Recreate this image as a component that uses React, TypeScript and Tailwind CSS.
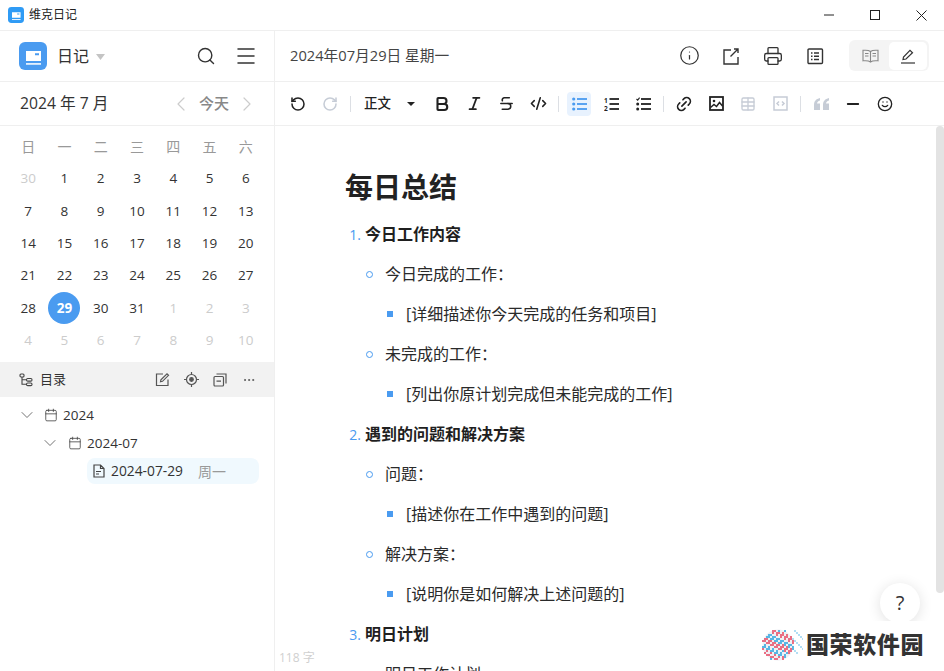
import React from "react";
import {
  Search, Menu, ChevronLeft, ChevronRight, ChevronDown, Info, Printer, RotateCcw, RotateCw,
  Bold, Italic, Strikethrough, CodeXml, Link2, Table, Minus, Smile,
  Ellipsis, Calendar,
} from "lucide-react";

const Logo = ({ small }: { small?: boolean }) => (
  <svg viewBox="0 0 28 28" className={small ? "w-[16px] h-[16px]" : "w-[28px] h-[28px]"}>
    <rect width="28" height="28" rx="6" fill={small ? "#2f9bf5" : "#4a9bf0"} />
    <path fillRule="evenodd" d="M7 9h15v10H7zM16 11.200v2h4v-2z" fill="#fff" />
    <rect x="7" y="21" width="15" height="1.800" fill="#e4f0fd" />
  </svg>
);

const Bar = () => <div className="w-px h-[16px] mx-2 bg-[#dcdfe4]" />;

const ToolIcon = ({ children, active }: { children: React.ReactNode; active?: boolean }) => (
  <div className={`w-[24px] h-[24px] flex items-center justify-center rounded-[4px] ${active ? "bg-[#e8f2fe] text-[#4a9bf0]" : ""}`}>{children}</div>
);

const weekdays = ["日", "一", "二", "三", "四", "五", "六"];
const days: [string, number][] = [
  ["30", 0], ["1", 1], ["2", 1], ["3", 1], ["4", 1], ["5", 1], ["6", 1],
  ["7", 1], ["8", 1], ["9", 1], ["10", 1], ["11", 1], ["12", 1], ["13", 1],
  ["14", 1], ["15", 1], ["16", 1], ["17", 1], ["18", 1], ["19", 1], ["20", 1],
  ["21", 1], ["22", 1], ["23", 1], ["24", 1], ["25", 1], ["26", 1], ["27", 1],
  ["28", 1], ["29", 2], ["30", 1], ["31", 1], ["1", 0], ["2", 0], ["3", 0],
  ["4", 0], ["5", 0], ["6", 0], ["7", 0], ["8", 0], ["9", 0], ["10", 0],
];

const rows: [number, string, string?][] = [
  [0, "今日工作内容", "1."],
  [1, "今日完成的工作："],
  [2, "[详细描述你今天完成的任务和项目]"],
  [1, "未完成的工作："],
  [2, "[列出你原计划完成但未能完成的工作]"],
  [0, "遇到的问题和解决方案", "2."],
  [1, "问题："],
  [2, "[描述你在工作中遇到的问题]"],
  [1, "解决方案："],
  [2, "[说明你是如何解决上述问题的]"],
  [0, "明日计划", "3."],
  [1, "明日工作计划"],
];

const Row = ({ level, text, num }: { level: number; text: string; num?: string }) => {
  if (level === 0)
    return (
      <div className="h-[40px] flex items-center">
        <span className="w-[16px] text-right text-[14px] text-[#4a9bf0] mr-[4px]">{num}</span>
        <span className="font-bold text-[16px] leading-[24px] text-[#1f1f1f]">{text}</span>
      </div>
    );
  if (level === 1)
    return (
      <div className="h-[40px] flex items-center pl-[21px]">
        <span className="w-[7px] h-[7px] rounded-full border border-[#4a9bf0] mr-[12px]" />
        <span className="text-[16px] leading-[24px] text-[#2a2a2a]">{text}</span>
      </div>
    );
  return (
    <div className="h-[40px] flex items-center pl-[42px]">
      <span className="w-[6px] h-[6px] bg-[#4a9bf0] mr-[13px]" />
      <span className="text-[16px] leading-[24px] text-[#2a2a2a]">{text}</span>
    </div>
  );
};

const GlobeLogo = () => {
  const dots: React.ReactNode[] = [];
  for (let y = 0; y < 17; y++) {
    for (let x = 0; x < 24; x++) {
      const cx = 2 + x * 2;
      const cy = 2 + y * 2;
      const d = Math.hypot(cx - 17, cy - 18);
      const inside = d <= 16;
      const tail = !inside && cx >= 24 && cx <= 42 && cy >= 3 && cy <= 26 && (x * 2 + y * 3) % 5 === 0;
      if (!inside && !tail) continue;
      const band = Math.floor((cy - cx * 0.45 + 40) / 6) % 2 === 0;
      if (inside && ((x + y) % 3 === 2 || (x * 3 + y) % 7 === 0)) continue;
      const fill = tail ? "#9fd6f2" : band ? "#e8506a" : "#35a8e0";
      dots.push(<rect key={`${x}-${y}`} x={cx - 0.9} y={cy - 0.9} width={1.8} height={1.8} fill={fill} />);
    }
  }
  return (
    <svg viewBox="0 0 42 36" className="w-[42px] h-[36px]">
      <circle cx="17" cy="18" r="15.500" fill="#eef0f4" />
      {dots}
    </svg>
  );
};

export default function App() {
  return (
    <div className="relative w-[944px] h-[671px] overflow-hidden bg-white flex flex-col text-[#333]" style={{ fontFamily: '"Open Sans","Noto Sans CJK SC",sans-serif' }}>
      {/* title bar */}
      <div className="h-[31px] flex items-center border-b border-[#efefef] shrink-0">
        <div className="ml-[8px]"><Logo small /></div>
        <span className="ml-[5px] text-[12px] text-[#222]">维克日记</span>
        <div className="ml-auto flex items-center text-[#222]">
          <div className="w-[46px] flex justify-center"><svg width="10" height="10" viewBox="0 0 10 10"><path d="M0 5h10" stroke="currentColor" /></svg></div>
          <div className="w-[46px] flex justify-center"><svg width="10" height="10" viewBox="0 0 10 10"><rect x=".5" y=".5" width="9" height="9" fill="none" stroke="currentColor" /></svg></div>
          <div className="w-[46px] flex justify-center"><svg width="11" height="11" viewBox="0 0 11 11"><path d="M.5.5l10 10M10.500.5l-10 10" stroke="currentColor" /></svg></div>
        </div>
      </div>

      <div className="flex flex-1 min-h-0">
        {/* sidebar */}
        <aside className="w-[275px] shrink-0 border-r border-[#efefef] flex flex-col">
          <div className="h-[51px] shrink-0 flex items-center pl-[19px] border-b border-[#efefef]">
            <Logo />
            <span className="ml-[10px] text-[16px] text-[#333]">日记</span>
            <svg width="10" height="6" viewBox="0 0 10 6" className="ml-[7px] mt-[1px]"><path d="M0 0h9L4.500 6z" fill="#c4c4c4" /></svg>
            <Search className="ml-auto w-[20px] h-[20px] text-[#333]" strokeWidth={1.700} />
            <Menu className="ml-[18px] mr-[16px] w-[24px] h-[24px] text-[#333]" strokeWidth={1.500} />
          </div>
          <div className="h-[44px] shrink-0 flex items-center pl-[20px] border-b border-[#efefef]">
            <span className="pt-[1px] text-[15.700px] text-[#333]">2024 年 7 月</span>
            <ChevronLeft className="ml-auto w-[24px] h-[24px] text-[#ccc]" strokeWidth={1.200} />
            <span className="mx-[6px] text-[15px] text-[#888] font-medium">今天</span>
            <ChevronRight className="mr-[15px] w-[24px] h-[24px] text-[#ccc]" strokeWidth={1.200} />
          </div>
          <div className="grid grid-cols-7 px-[10px] pt-[4px] shrink-0 auto-rows-[32.300px]">
            {weekdays.map((w) => (
              <div key={w} className="flex items-center justify-center text-[14px] text-[#999]">{w}</div>
            ))}
            {days.map(([d, s], i) => (
              <div key={i} className="flex items-center justify-center text-[13.500px]">
                {s === 2 ? (
                  <span className="w-[32px] h-[32px] rounded-full bg-[#4a9bf0] text-white font-bold flex items-center justify-center">{d}</span>
                ) : (
                  <span className={s === 1 ? "text-[#333]" : "text-[#ccc]"}>{d}</span>
                )}
              </div>
            ))}
          </div>
          <div className="mt-[6px] h-[35px] shrink-0 bg-[#f2f2f2] flex items-center pl-[19px]">
            <svg width="14" height="14" viewBox="0 0 14 14" fill="none" stroke="#444" strokeWidth="1.100"><rect x="1" y="1" width="4" height="3" rx="1" /><rect x="7.500" y="5.500" width="5.500" height="2.600" rx="1.200" /><rect x="7.500" y="10" width="5.500" height="2.600" rx="1.200" /><path d="M3 4v7.300h4.500M3 6.800h4.500" /></svg>
            <span className="ml-[7px] text-[13px] text-[#333]">目录</span>
            <svg className="ml-auto" width="15" height="15" viewBox="0 0 15 15" fill="none" stroke="#555" strokeWidth="1.200"><path d="M13 7.500V13.500H1.500V2H8" /><path d="M5.500 9.800l.4-2L12 1.800l1.500 1.500-6 6z" /></svg>
            <svg className="ml-[14px]" width="15" height="15" viewBox="0 0 15 15" fill="none" stroke="#555" strokeWidth="1.200"><circle cx="7.500" cy="7.500" r="5" /><circle cx="7.500" cy="7.500" r="1.800" fill="#555" /><path d="M7.500 0v2.500M7.500 12.500V15M0 7.500h2.500M12.500 7.500H15" /></svg>
            <svg className="ml-[14px]" width="14" height="14" viewBox="0 0 14 14" fill="none" stroke="#555" strokeWidth="1.200"><rect x="1" y="3.500" width="9.500" height="9.500" rx="1" /><path d="M3.500 1h9.500v9.500M3.500 8.200h4.500" /></svg>
            <Ellipsis className="ml-[15px] mr-[18px] w-[14px] h-[14px] text-[#555]" strokeWidth={1.600} />
          </div>
          <div className="pt-[4px] text-[#444]">
            <div className="h-[28px] flex items-center pl-[17px]">
              <ChevronDown className="w-[20px] h-[20px] text-[#666]" strokeWidth={1.100} />
              <Calendar className="ml-[7px] w-[14px] h-[14px] text-[#444]" strokeWidth={1.400} />
              <span className="ml-[5px] text-[13.500px] text-[#333]">2024</span>
            </div>
            <div className="h-[28px] flex items-center pl-[40px]">
              <ChevronDown className="w-[20px] h-[20px] text-[#666]" strokeWidth={1.100} />
              <Calendar className="ml-[8px] w-[14px] h-[14px] text-[#444]" strokeWidth={1.400} />
              <span className="ml-[5px] text-[13.500px] text-[#333]">2024-07</span>
            </div>
            <div className="h-[26px] mt-px ml-[87px] mr-[15px] rounded-[8px] bg-[#f0f9fe] flex items-center pl-[6px]">
              <svg width="12" height="14" viewBox="0 0 12 14" fill="none" stroke="#444" strokeWidth="1.200"><path d="M1 1h6.500L11 4.500V13H1zM7.500 1v3.500H11" /><path d="M3 7.500h5M3 10h3" /></svg>
              <span className="ml-[6px] text-[13.800px] text-[#333]">2024-07-29</span>
              <span className="ml-[15px] text-[14px] text-[#999]">周一</span>
            </div>
          </div>
        </aside>

        {/* main */}
        <main className="flex-1 min-w-0 flex flex-col relative">
          <div className="h-[51px] shrink-0 flex items-center pl-[15px] pb-[1px] border-b border-[#efefef]">
            <span className="text-[14.700px] text-[#444]">2024年07月29日 星期一</span>
            <div className="ml-auto flex items-center gap-[22px] text-[#333]">
              <Info className="w-[21px] h-[21px] -mx-[0.500px]" strokeWidth={1.400} />
              <svg width="20" height="20" viewBox="0 0 20 20" fill="none" stroke="currentColor" strokeWidth="1.400"><path d="M10 4H3v14h14v-7" /><path d="M9.500 10.500l7-7M13 3h4v4" /></svg>
              <Printer className="w-[20px] h-[20px]" strokeWidth={1.600} />
              <svg width="20" height="20" viewBox="0 0 20 20" fill="none" stroke="currentColor" strokeWidth="1.400"><rect x="3" y="3" width="14.500" height="14.500" rx="1" /><path d="M6 7h1.500M9 7h5M6 10.250h1.500M9 10.250h5M6 13.500h1.500M9 13.500h5" /></svg>
            </div>
            <div className="ml-[24px] mr-[15px] w-[80px] h-[31px] rounded-[6px] bg-[#f4f4f4] flex items-center p-[2px]">
              <div className="w-[38px] flex justify-center">
                <svg width="17" height="14" viewBox="0 0 17 14" fill="none" stroke="#888" strokeWidth="1.100"><path d="M8.500 2.500C7 1.300 4 1 1 1.300v10.500c3-.3 6 0 7.500 1.200 1.500-1.200 4.500-1.500 7.500-1.200V1.300C13 1 10 1.300 8.500 2.500zM8.500 2.500V13M3 4.500h3.500M3 7h3.500M10.500 4.500H14M10.500 7H14" /></svg>
              </div>
              <div className="w-[38px] ml-auto h-[28px] rounded-[5px] bg-white flex items-center justify-center">
                <svg width="16" height="16" viewBox="0 0 16 16" fill="none" stroke="#333" strokeWidth="1.200"><path d="M1 15h14" /><path d="M3 11.500l.5-2.500L10 2.300l2.500 2.400L6 11z" /></svg>
              </div>
            </div>
          </div>
          <div className="h-[44px] shrink-0 flex items-center pl-[11px] border-b border-[#efefef] text-[#222]">
            <div className="flex items-center gap-2">
              <ToolIcon><RotateCcw className="w-[16px] h-[16px]" strokeWidth={2.300} /></ToolIcon>
              <ToolIcon><RotateCw className="w-[16px] h-[16px] text-[#c6ccd6]" strokeWidth={2.300} /></ToolIcon>
            </div>
            <Bar />
            <span className="ml-[5px] text-[13.500px] font-medium w-[28px]">正文</span>
            <svg width="8" height="4" viewBox="0 0 8 4" className="ml-[15px]"><path d="M0 0h8L4 4z" fill="#222" /></svg>
            <div className="ml-[15px] flex items-center gap-2">
              <ToolIcon><Bold className="w-[18px] h-[18px]" strokeWidth={2.800} /></ToolIcon>
              <ToolIcon><Italic className="w-[17px] h-[17px]" strokeWidth={2.400} /></ToolIcon>
              <ToolIcon><Strikethrough className="w-[17px] h-[17px]" strokeWidth={2.200} /></ToolIcon>
              <ToolIcon><CodeXml className="w-[17px] h-[17px]" strokeWidth={2.200} /></ToolIcon>
            </div>
            <Bar />
            <div className="flex items-center gap-2">
              <ToolIcon active>
                <svg width="15" height="14" viewBox="0 0 15 14" fill="currentColor"><circle cx="1.700" cy="2" r="1.600" /><circle cx="1.700" cy="7" r="1.600" /><circle cx="1.700" cy="12" r="1.600" /><rect x="5" y="1.100" width="10" height="1.800" /><rect x="5" y="6.100" width="10" height="1.800" /><rect x="5" y="11.100" width="10" height="1.800" /></svg>
              </ToolIcon>
              <ToolIcon>
                <svg width="15" height="14" viewBox="0 0 15 14" fill="currentColor"><text x="0" y="6" fontSize="6.500" fontWeight="700">1</text><text x="0" y="13.500" fontSize="6.500" fontWeight="700">2</text><rect x="5.500" y="1.100" width="9.500" height="1.800" /><rect x="5.500" y="6.100" width="9.500" height="1.800" /><rect x="5.500" y="11.100" width="9.500" height="1.800" /></svg>
              </ToolIcon>
              <ToolIcon>
                <svg width="15" height="14" viewBox="0 0 15 14" fill="currentColor"><path d="M.5 2l1.200 1.200L3.600.7" fill="none" stroke="currentColor" strokeWidth="1.100" /><circle cx="1.700" cy="7" r="1.500" /><circle cx="1.700" cy="12" r="1.500" /><rect x="5" y="1.100" width="10" height="1.800" /><rect x="5" y="6.100" width="10" height="1.800" /><rect x="5" y="11.100" width="10" height="1.800" /></svg>
              </ToolIcon>
            </div>
            <Bar />
            <div className="flex items-center gap-2">
              <ToolIcon><Link2 className="w-[18px] h-[18px] -rotate-45" strokeWidth={2.200} /></ToolIcon>
              <ToolIcon>
                <svg width="15" height="15" viewBox="0 0 15 15" fill="none" stroke="currentColor" strokeWidth="1.800"><rect x="1" y="1" width="13" height="13" /><circle cx="5" cy="5" r="1.300" fill="currentColor" stroke="none" /><path d="M1.500 11.500l3.500-3 2.500 2 3-4 3 3.500" strokeWidth="1.500" /></svg>
              </ToolIcon>
              <ToolIcon><Table className="w-[16px] h-[16px] text-[#c6ccd6]" strokeWidth={2} /></ToolIcon>
              <ToolIcon>
                <svg width="15" height="15" viewBox="0 0 15 15" fill="none" stroke="#c6ccd6" strokeWidth="1.500"><rect x="1" y="1" width="13" height="13" /><path d="M6 5.500L4 7.500l2 2M9 5.500l2 2-2 2" /></svg>
              </ToolIcon>
            </div>
            <Bar />
            <div className="flex items-center gap-2">
              <ToolIcon>
                <svg width="15" height="12" viewBox="0 0 15 12" fill="#c6ccd6"><path d="M0 12V7C0 3 2 1 6 0v2.500C4 3 3.300 4 3 5.500h3V12zM9 12V7c0-4 2-6 6-7v2.500C13 3 12.300 4 12 5.500h3V12z" /></svg>
              </ToolIcon>
              <ToolIcon><Minus className="w-[18px] h-[18px]" strokeWidth={2.400} /></ToolIcon>
              <ToolIcon><Smile className="w-[16px] h-[16px]" strokeWidth={2} /></ToolIcon>
            </div>
          </div>

          <div className="flex-1 min-h-0 overflow-hidden relative pl-[70px] pt-[39px]">
            <h1 className="h-[44px] flex items-center text-[28px] font-bold text-[#222] mb-[5px]">每日总结</h1>
            {rows.map(([l, t, n], i) => (
              <Row key={i} level={l} text={t} num={n} />
            ))}
            <span className="absolute left-[4px] top-[523px] text-[12px] text-[#d0d0d0]">118 字</span>
            <div className="absolute right-0 top-0 w-[8px] h-[467px] rounded-[4px] bg-[#e3e3e3]" />
          </div>
        </main>
      </div>

      {/* floating help + watermark */}
      <div className="absolute left-[880px] top-[583px] w-[40px] h-[40px] rounded-full bg-white shadow-[0_2px_14px_rgba(0,0,0,0.12)] flex items-center justify-center text-[20px] text-[#333]">?</div>
      <div className="absolute left-[745px] top-[621px] w-[199px] h-[50px] bg-white flex items-center pl-[16px] pb-[3px]">
        <GlobeLogo />
        <span className="ml-[3px] text-[23px] font-black tracking-[0.600px] text-[#333] leading-none">国荣软件园</span>
      </div>
    </div>
  );
}
